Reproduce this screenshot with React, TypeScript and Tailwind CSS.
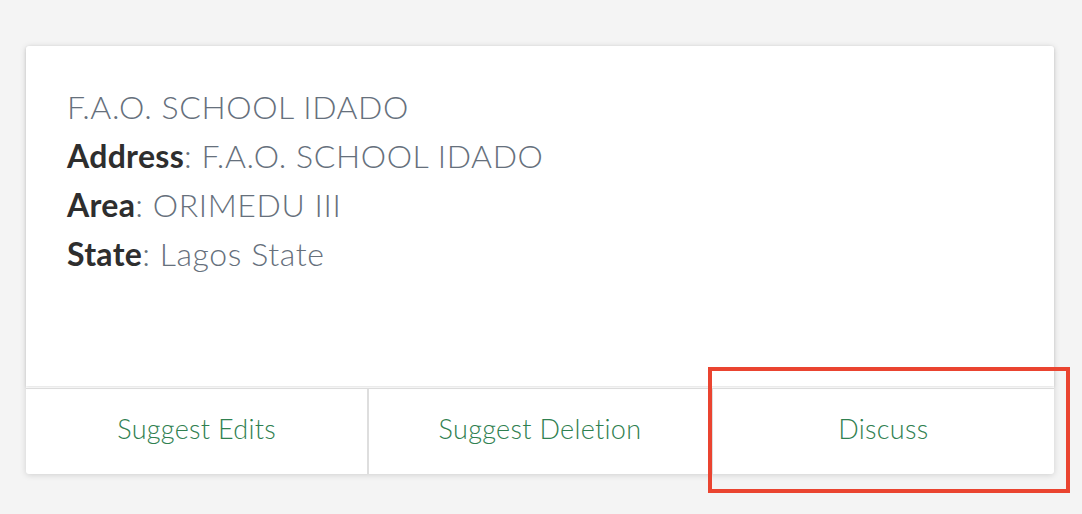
import React from "react";

export default function App() {
  const font = { fontFamily: 'Lato, "Noto Sans", sans-serif' };
  return (
    <div className="relative w-[1082px] h-[514px] bg-[#f4f4f4] overflow-hidden" style={font}>
      <div className="pt-[46px] pl-[26px]">
        <div className="w-[1028px] bg-white shadow-[0_1px_6px_rgba(0,0,0,0.15)] rounded-[3px]">
          <div className="h-[340px] pt-[36px] pl-[41px] text-[32px] leading-[49px] tracking-[0.6px] font-light text-[#66707c] rounded-t-[3px] shadow-[0_1px_3px_rgba(0,0,0,0.12)]">
            <div>F.A.O. SCHOOL IDADO</div>
            <div><span className="font-bold text-[#2e2e2e] tracking-[0.3px]">Address</span>: F.A.O. SCHOOL IDADO</div>
            <div><span className="font-bold text-[#2e2e2e] tracking-[0.3px]">Area</span>: ORIMEDU III</div>
            <div><span className="font-bold text-[#2e2e2e] tracking-[0.3px]">State</span>: Lagos State</div>
          </div>
          <div className="mt-[2px] border-t border-[#dcdcdc] flex h-[86px] text-[27px] tracking-[0.3px] font-light text-[#2f8050]">
            <div className="flex-1 flex items-center justify-center border-r-2 border-[#dedede] pb-[4px]">Suggest Edits</div>
            <div className="flex-1 flex items-center justify-center border-r-2 border-[#dedede] pb-[4px]">Suggest Deletion</div>
            <div className="flex-1 flex items-center justify-center pb-[4px]">Discuss</div>
          </div>
        </div>
      </div>
      <div className="absolute left-[708px] top-[367px] w-[362px] h-[126px] border-[4px] border-[#ea4430]" />
    </div>
  );
}
